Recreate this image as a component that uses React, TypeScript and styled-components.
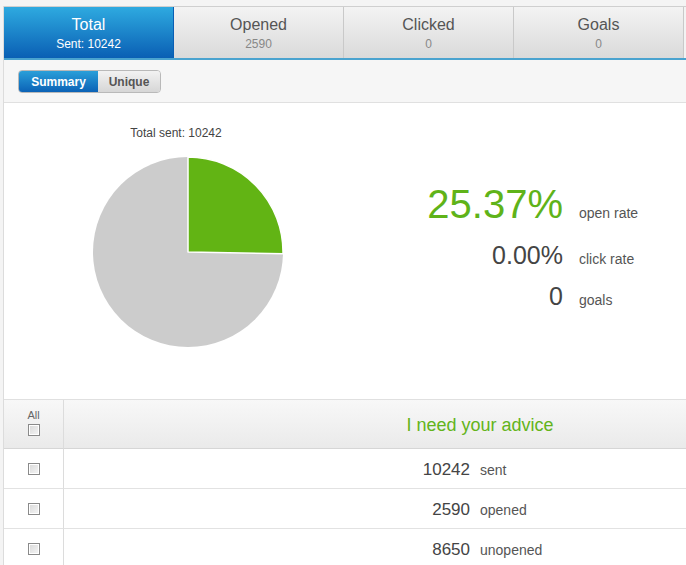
import React from 'react';
import styled, { createGlobalStyle, css } from 'styled-components';

const GlobalStyle = createGlobalStyle`
  html, body {
    margin: 0;
    padding: 0;
    background: #f4f4f4;
  }
  body {
    font-family: "Liberation Sans", Arial, sans-serif;
  }
`;

const Page = styled.div`
  width: 686px;
  height: 565px;
  overflow: hidden;
  padding-top: 6px;
  box-sizing: border-box;
`;

const Panel = styled.div`
  margin-left: 3px;
  border-left: 1px solid #dcdcdc;
  background: #ffffff;
`;

const Tabs = styled.div`
  display: flex;
  border-top: 1px solid #cfcfcf;
  border-bottom: 2px solid #4aa3cf;
  background: #f3f3f3;
`;

const Tab = styled.div<{ active?: boolean }>`
  flex: 0 0 170px;
  height: 51px;
  box-sizing: border-box;
  padding-top: 9px;
  text-align: center;
  border-right: 1px solid #c9c9c9;
  background: linear-gradient(#f3f3f3, #dadada);
  color: #555;

  ${({ active }) => active && css`
    background: linear-gradient(#2eaae0, #0a5fb4);
    border-right-color: #0a5fb4;
    color: #fff;
  `}
`;

const TabTitle = styled.div`
  font-size: 16px;
  line-height: 18px;
`;

const TabSub = styled.div<{ active?: boolean }>`
  font-size: 12px;
  line-height: 14px;
  margin-top: 3px;
  color: ${({ active }) => (active ? '#fff' : '#888')};
`;

const Toolbar = styled.div`
  height: 43px;
  box-sizing: border-box;
  padding: 10px 14px 0;
  background: #f6f6f6;
  border-bottom: 1px solid #e0e0e0;
`;

const Segmented = styled.div`
  display: inline-flex;
  height: 23px;
  border-radius: 4px;
  overflow: hidden;
  border: 1px solid #b9b9b9;
  box-sizing: border-box;
`;

const SegButton = styled.button<{ active?: boolean }>`
  border: none;
  margin: 0;
  padding: 0;
  font-family: "Liberation Sans", Arial, sans-serif;
  font-size: 12px;
  font-weight: bold;
  cursor: pointer;
  width: ${({ active }) => (active ? 79 : 62)}px;
  background: linear-gradient(#f2f2f2, #d6d6d6);
  color: #555;

  ${({ active }) => active && css`
    background: linear-gradient(#2a9fd9, #0b62b6);
    color: #fff;
  `}
`;

const Summary = styled.section`
  display: flex;
  height: 296px;
  border-bottom: 1px solid #e0e0e0;
  background: #fff;
`;

const ChartBlock = styled.div`
  flex: 0 0 369px;
  display: flex;
  flex-direction: column;
  padding: 22px 0 0 88px;
  box-sizing: border-box;
`;

const ChartLabel = styled.div`
  width: 190px;
  text-align: center;
  font-size: 12px;
  line-height: 16px;
  color: #444;
  padding-right: 22px;
  box-sizing: border-box;
`;

const PieSvg = styled.svg`
  display: block;
  margin-top: 15px;
`;

const Stats = styled.div`
  padding-top: 78px;
`;

const StatRow = styled.div<{ lh: number }>`
  display: grid;
  grid-template-columns: 190px auto;
  column-gap: 16px;
  align-items: baseline;
  line-height: ${({ lh }) => lh}px;
`;

const StatValue = styled.div<{ big?: boolean }>`
  text-align: right;
  font-size: ${({ big }) => (big ? 40 : 25)}px;
  color: ${({ big }) => (big ? '#5fb319' : '#444')};
`;

const StatLabel = styled.div`
  font-size: 14px;
  color: #555;
`;

const Table = styled.div`
  display: grid;
  grid-template-columns: 60px 1fr;
  background: #fff;
`;

const HeadCell = styled.div<{ first?: boolean }>`
  height: 49px;
  box-sizing: border-box;
  background: linear-gradient(#f8f8f8, #eaeaea);
  border-bottom: 1px solid #d6d6d6;
  ${({ first }) => first && css`
    border-right: 1px solid #dcdcdc;
    display: flex;
    flex-direction: column;
    align-items: center;
    padding-top: 9px;
  `}
`;

const AllLabel = styled.div`
  font-size: 11px;
  line-height: 13px;
  color: #666;
  margin-bottom: 2px;
`;

const HeadTitle = styled.div`
  padding-left: 210px;
  text-align: center;
  font-size: 18px;
  line-height: 50px;
  color: #63b41a;
`;

const Cell = styled.div<{ first?: boolean }>`
  height: 40px;
  box-sizing: border-box;
  border-bottom: 1px solid #e2e2e2;
  display: flex;
  align-items: center;
  ${({ first }) => first && css`
    justify-content: center;
    border-right: 1px solid #dcdcdc;
  `}
`;

const CountGroup = styled.div`
  display: grid;
  grid-template-columns: 406px auto;
  column-gap: 10px;
  align-items: baseline;
  padding-top: 2px;
`;

const Count = styled.span`
  text-align: right;
  font-size: 17px;
  color: #444;
`;

const CountLabel = styled.span`
  font-size: 14px;
  color: #555;
`;

const Check = styled.input.attrs({ type: 'checkbox' })`
  appearance: none;
  -webkit-appearance: none;
  margin: 0;
  width: 12px;
  height: 12px;
  box-sizing: border-box;
  border: 1px solid #8a8a8a;
  background: linear-gradient(135deg, #d8d8d8, #f6f6f6);
  box-shadow: inset 0 0 0 1px #fff;
`;

const pct = 2590 / 10242;

function Pie() {
  const cx = 96;
  const cy = 96;
  const r = 95;
  const a = pct * Math.PI * 2;
  const x = cx + r * Math.sin(a);
  const y = cy - r * Math.cos(a);
  return (
    <PieSvg width="192" height="192" viewBox="0 0 192 192">
      <circle cx={cx} cy={cy} r={r} fill="#cccccc" />
      <path
        d={`M${cx} ${cy} L${cx} ${cy - r} A${r} ${r} 0 0 1 ${x} ${y} Z`}
        fill="#62b414"
        stroke="#ffffff"
        strokeWidth="1.5"
        strokeLinejoin="round"
      />
    </PieSvg>
  );
}

const tabs = [
  { title: 'Total', sub: 'Sent: 10242', active: true },
  { title: 'Opened', sub: '2590' },
  { title: 'Clicked', sub: '0' },
  { title: 'Goals', sub: '0' },
];

const rows = [
  { n: '10242', label: 'sent' },
  { n: '2590', label: 'opened' },
  { n: '8650', label: 'unopened' },
];

export default function App() {
  return (
    <Page>
      <GlobalStyle />
      <Panel>
        <Tabs>
          {tabs.map((t) => (
            <Tab key={t.title} active={t.active}>
              <TabTitle>{t.title}</TabTitle>
              <TabSub active={t.active}>{t.sub}</TabSub>
            </Tab>
          ))}
        </Tabs>
        <Toolbar>
          <Segmented>
            <SegButton active>Summary</SegButton>
            <SegButton>Unique</SegButton>
          </Segmented>
        </Toolbar>
        <Summary>
          <ChartBlock>
            <ChartLabel>Total sent: 10242</ChartLabel>
            <Pie />
          </ChartBlock>
          <Stats>
            <StatRow lh={47}>
              <StatValue big>25.37%</StatValue>
              <StatLabel>open rate</StatLabel>
            </StatRow>
            <StatRow lh={37}>
              <StatValue>0.00%</StatValue>
              <StatLabel>click rate</StatLabel>
            </StatRow>
            <StatRow lh={37}>
              <StatValue>0</StatValue>
              <StatLabel>goals</StatLabel>
            </StatRow>
          </Stats>
        </Summary>
        <Table>
          <HeadCell first>
            <AllLabel>All</AllLabel>
            <Check />
          </HeadCell>
          <HeadCell>
            <HeadTitle>I need your advice</HeadTitle>
          </HeadCell>
          {rows.map((r) => (
            <React.Fragment key={r.label}>
              <Cell first>
                <Check />
              </Cell>
              <Cell>
                <CountGroup>
                  <Count>{r.n}</Count>
                  <CountLabel>{r.label}</CountLabel>
                </CountGroup>
              </Cell>
            </React.Fragment>
          ))}
        </Table>
      </Panel>
    </Page>
  );
}
